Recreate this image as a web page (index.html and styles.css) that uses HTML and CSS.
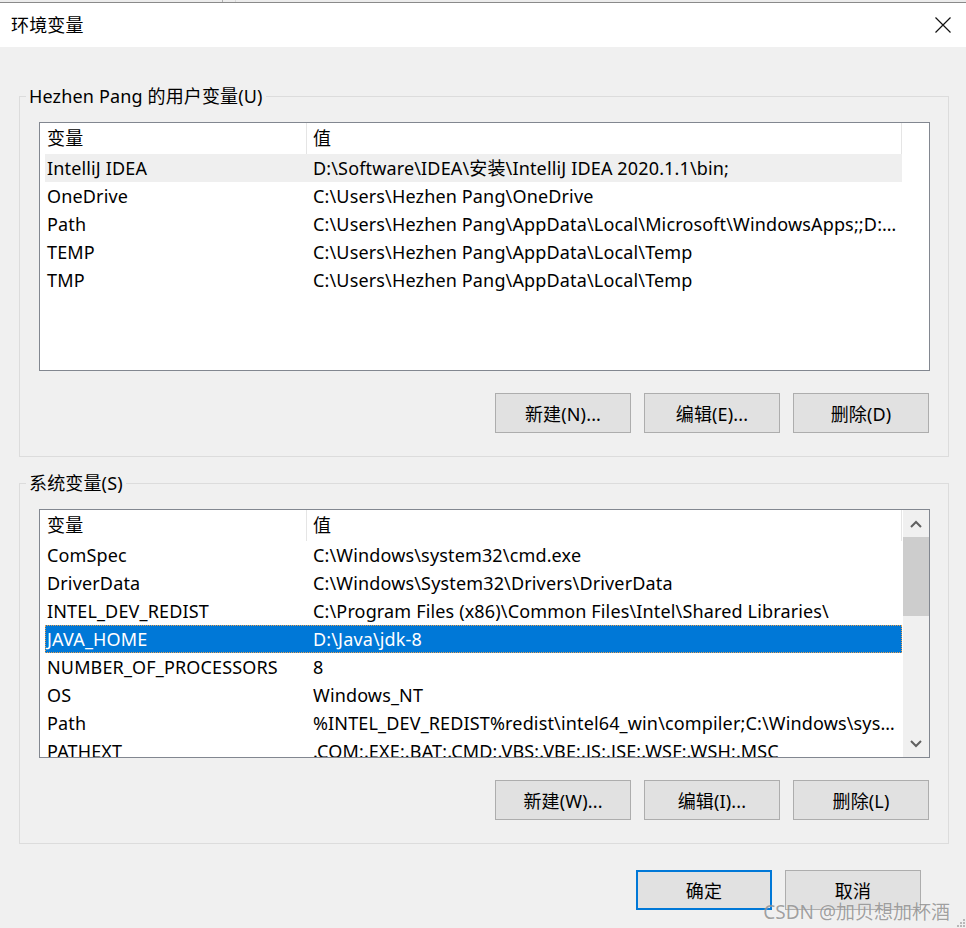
FILE: index.html
```html
<!DOCTYPE html>
<html lang="zh-CN">
<head>
    <meta charset="UTF-8">
    <title>环境变量</title>
    <link rel="stylesheet" href="styles.css">
</head>
<body>
<div class="behind"><i></i></div>
<div class="titlebar">
    <span class="title">环境变量</span>
    <svg class="close" width="16" height="16" viewBox="0 0 16 16"><path d="M0.5 0.5L15.5 15.5M15.5 0.5L0.5 15.5" stroke="#111" stroke-width="1.2" fill="none"/></svg>
</div>

<div class="group">
    <div class="legend">Hezhen Pang 的用户变量(U)</div>
    <div class="list">
        <div class="rows">
            <div class="head"><span>变量</span><span>值</span></div>
            <div class="row hover"><span>IntelliJ IDEA</span><span>D:\Software\IDEA\安装\IntelliJ IDEA 2020.1.1\bin;</span></div>
            <div class="row"><span>OneDrive</span><span>C:\Users\Hezhen Pang\OneDrive</span></div>
            <div class="row"><span>Path</span><span>C:\Users\Hezhen Pang\AppData\Local\Microsoft\WindowsApps;;D:\Software\IDEA\bin</span></div>
            <div class="row"><span>TEMP</span><span>C:\Users\Hezhen Pang\AppData\Local\Temp</span></div>
            <div class="row"><span>TMP</span><span>C:\Users\Hezhen Pang\AppData\Local\Temp</span></div>
        </div>
    </div>
    <div class="buttons">
        <button>新建(N)...</button>
        <button>编辑(E)...</button>
        <button>删除(D)</button>
    </div>
</div>

<div class="group">
    <div class="legend">系统变量(S)</div>
    <div class="list">
        <div class="rows">
            <div class="head"><span>变量</span><span>值</span></div>
            <div class="row"><span>ComSpec</span><span>C:\Windows\system32\cmd.exe</span></div>
            <div class="row"><span>DriverData</span><span>C:\Windows\System32\Drivers\DriverData</span></div>
            <div class="row"><span>INTEL_DEV_REDIST</span><span>C:\Program Files (x86)\Common Files\Intel\Shared Libraries\</span></div>
            <div class="row selected"><span>JAVA_HOME</span><span>D:\Java\jdk-8</span></div>
            <div class="row"><span>NUMBER_OF_PROCESSORS</span><span>8</span></div>
            <div class="row"><span>OS</span><span>Windows_NT</span></div>
            <div class="row"><span>Path</span><span>%INTEL_DEV_REDIST%redist\intel64_win\compiler;C:\Windows\system32;C:\Windows</span></div>
            <div class="row"><span>PATHEXT</span><span>.COM;.EXE;.BAT;.CMD;.VBS;.VBE;.JS;.JSE;.WSF;.WSH;.MSC</span></div>
        </div>
        <div class="scrollbar">
            <div class="arrow"><svg width="12" height="8" viewBox="0 0 12 8"><path d="M1 7L6 2L11 7" stroke="#606060" stroke-width="2" fill="none"/></svg></div>
            <div class="thumb"></div>
            <div class="track"></div>
            <div class="arrow"><svg width="12" height="8" viewBox="0 0 12 8"><path d="M1 1L6 6L11 1" stroke="#606060" stroke-width="2" fill="none"/></svg></div>
        </div>
    </div>
    <div class="buttons">
        <button>新建(W)...</button>
        <button>编辑(I)...</button>
        <button>删除(L)</button>
    </div>
</div>

<div class="footer">
    <button class="default">确定</button>
    <button>取消</button>
</div>

<div class="watermark">CSDN @加贝想加杯酒</div>
<svg class="grip" width="10" height="10" viewBox="0 0 10 10">
    <rect x="8" y="2" width="2" height="2" fill="#b8b8b8"/>
    <rect x="5" y="5" width="2" height="2" fill="#b8b8b8"/>
    <rect x="8" y="5" width="2" height="2" fill="#b8b8b8"/>
    <rect x="2" y="8" width="2" height="2" fill="#b8b8b8"/>
    <rect x="5" y="8" width="2" height="2" fill="#b8b8b8"/>
    <rect x="8" y="8" width="2" height="2" fill="#b8b8b8"/>
</svg>
</body>
</html>
```

FILE: styles.css
```css
*{
    box-sizing: border-box;
}
body{
    margin: 0;
    width: 966px;
    height: 928px;
    overflow: hidden;
    position: relative;
    background: #f0f0f0;
    color: #000;
    font-family: "Noto Sans", "Noto Sans CJK SC", sans-serif;
    font-size: 18px;
    letter-spacing: 0.15px;
}
.behind{
    height: 2px;
    background: #ececec;
    display: flex;
}
.behind i{
    width: 14px;
    margin-left: 222px;
    border-left: 1px solid #b0b0b0;
    border-right: 1px solid #d8d8d8;
}
.titlebar{
    height: 45px;
    border-top: 1px solid #8a8a8a;
    background: #fff;
    display: flex;
    align-items: center;
    justify-content: space-between;
    padding: 0 15px 0 11px;
}
.title{
    line-height: 24px;
}
.close{
    display: block;
}
.group{
    margin: 49px 17px 0 19px;
    border: 1px solid #dcdcdc;
    padding: 0 0 23px;
}
.group + .group{
    margin-top: 26px;
}
.legend{
    width: fit-content;
    margin: -13px 0 0 6px;
    padding: 0 3px;
    height: 24px;
    line-height: 24px;
    background: #f0f0f0;
}
.list{
    margin: 14px 18px 0 19px;
    height: 249px;
    border: 1px solid #828790;
    background: #fff;
    display: flex;
    overflow: hidden;
}
.rows{
    flex: none;
    width: 863px;
    padding: 0 1px 0 5px;
    overflow: hidden;
}
.head, .row{
    display: grid;
    grid-template-columns: 261px 1fr;
    white-space: nowrap;
}
.head{
    height: 31px;
    line-height: 31px;
    border-right: 1px solid #e5e5e5;
}
.head span{
    padding-left: 2px;
}
.head span + span{
    border-left: 1px solid #e5e5e5;
    padding-left: 6px;
}
.row{
    height: 28px;
    line-height: 28px;
}
.row span{
    padding-left: 2px;
    overflow: hidden;
    text-overflow: ellipsis;
}
.row span + span{
    padding: 0 5px 0 7px;
}
.row.hover{
    background: #efefef;
}
.row.selected{
    background: #0078d7;
    color: #fff;
    outline: 1px dotted #e8a050;
    outline-offset: -1px;
}
.scrollbar{
    flex: 1;
    background: #f0f0f0;
    display: flex;
    flex-direction: column;
}
.arrow{
    height: 27px;
    display: flex;
    align-items: center;
    justify-content: center;
}
.thumb{
    height: 79px;
    background: #cdcdcd;
}
.track{
    flex: 1;
}
.buttons{
    display: flex;
    justify-content: flex-end;
    gap: 13px;
    margin: 22px 19px 0 0;
}
button{
    width: 136px;
    height: 40px;
    border: 1px solid #adadad;
    background: #e1e1e1;
    font-family: inherit;
    font-size: 18px;
    letter-spacing: 0.15px;
    color: #000;
    padding: 0;
}
.footer{
    display: flex;
    justify-content: flex-end;
    gap: 13px;
    margin: 26px 45px 0 0;
}
button.default{
    border: 2px solid #0078d7;
}
.watermark{
    position: absolute;
    right: 16px;
    bottom: 3px;
    font-size: 19px;
    letter-spacing: 0;
    color: rgba(100, 100, 100, 0.6);
    text-shadow: 0 0 1px rgba(255, 255, 255, 0.7);
}
.grip{
    position: absolute;
    right: 1px;
    bottom: 1px;
}
```
